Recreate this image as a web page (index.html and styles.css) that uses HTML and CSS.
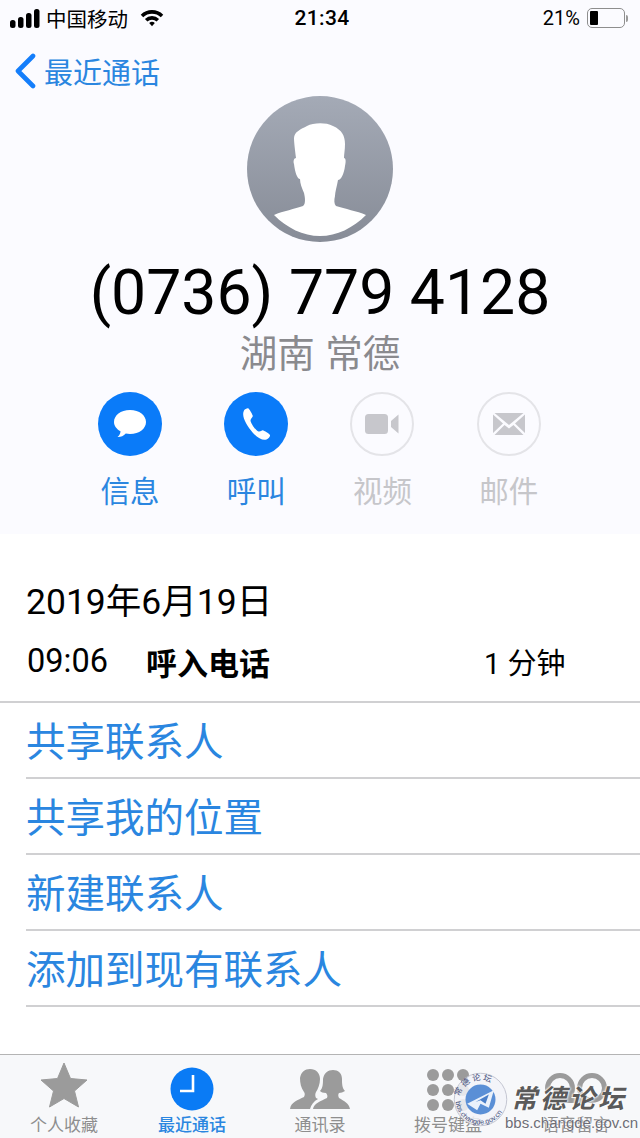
FILE: index.html
```html
<!DOCTYPE html>
<html lang="zh-CN">
<head>
    <meta charset="UTF-8">
    <meta name="viewport" content="width=device-width, initial-scale=1.0">
    <title>最近通话</title>
    <link rel="stylesheet" href="styles.css">
</head>
<body>
    <div class="phone">
        <div class="header">
            <div class="status-bar">
                <div class="status-left">
                    <svg class="signal" width="30" height="19" viewBox="0 0 30 19">
                        <rect x="0" y="11" width="5.5" height="8" rx="2.5"/>
                        <rect x="8" y="8" width="5.5" height="11" rx="2.5"/>
                        <rect x="16" y="4" width="5.5" height="15" rx="2.5"/>
                        <rect x="24" y="0" width="5.5" height="19" rx="2.5"/>
                    </svg>
                    <span class="carrier">中国移动</span>
                    <svg class="wifi" width="24" height="18" viewBox="0 0 21 16">
                        <path d="M0.5 5 A14.5 14.5 0 0 1 20.5 5 L18.3 7.3 A11.4 11.4 0 0 0 2.7 7.3 Z"/>
                        <path d="M4.2 8.8 A9.2 9.2 0 0 1 16.8 8.8 L14.6 11 A6.2 6.2 0 0 0 6.4 11 Z"/>
                        <path d="M8 12.5 A3.8 3.8 0 0 1 13 12.5 L10.5 15.4 Z"/>
                    </svg>
                </div>
                <div class="clock">21:34</div>
                <div class="status-right">
                    <span class="percent">21%</span>
                    <div class="battery"><div class="battery-level"></div></div>
                    <div class="battery-cap"></div>
                </div>
            </div>

            <div class="nav">
                <svg class="back-icon" width="22" height="36" viewBox="0 0 22 36">
                    <path d="M19 3 L4 18 L19 33" fill="none" stroke="#147efb" stroke-width="4.6" stroke-linecap="round" stroke-linejoin="round"/>
                </svg>
                <span class="back-label">最近通话</span>
            </div>

            <div class="contact">
                <div class="avatar">
                    <svg width="146" height="146" viewBox="0 0 146 146">
                        <path d="M27 119 C36 115 48 113 56 110 C59 108 58 101 57 97 C55 92 53 88 53 83 C50 83 48 76 47 68 C46 65 47 62 49 62 C48 54 47 46 47 42 C47 36 54 33 60 30 C66 27 78 26 86 30 C95 34 98 40 98 48 C98 54 97 58 97 62 C99 62 99 66 98 70 C97 78 94 84 91 84 C90 90 88 96 88 100 C87 104 87 108 89 110 C98 113 110 115 119 119 C106 132 90 140 73 140 C56 140 40 132 27 119 Z" fill="#fff"/>
                    </svg>
                </div>
                <div class="number">(0736) 779 4128</div>
                <div class="place">湖南 常德</div>
            </div>

            <div class="actions">
                <div class="action">
                    <div class="action-circle on">
                        <svg width="34" height="30" viewBox="0 0 34 30">
                            <path d="M17 1 C26.500 1 33 6.500 33 13 C33 19.500 26.500 25 17 25 C15.500 25 14 24.800 12.800 24.500 C10.500 27 7.500 28.200 4.500 28 C6.500 26.500 7.500 24.500 7.500 22.300 C3.500 20 1 16.800 1 13 C1 6.500 7.500 1 17 1 Z" fill="#fff"/>
                        </svg>
                    </div>
                    <span class="action-label on">信息</span>
                </div>
                <div class="action">
                    <div class="action-circle on">
                        <svg width="30" height="34" viewBox="0 0 30 34">
                            <path d="M3 3.500 C4 2 6.500 0.800 7.500 1.500 C8.500 2.200 11.500 7.500 11.800 8.800 C12 10 9.500 11.500 9.500 13.500 C9.500 16 15 24 17.500 24.500 C19.500 25 20.500 23.200 21.800 23.300 C23 23.500 28.500 27 29 28 C29.500 29.200 27.500 31.800 25.500 32.500 C22 33.800 17 31.500 12 26 C5.500 18.500 0 9 3 3.500 Z" fill="#fff"/>
                        </svg>
                    </div>
                    <span class="action-label on">呼叫</span>
                </div>
                <div class="action">
                    <div class="action-circle">
                        <svg width="34" height="20" viewBox="0 0 34 20">
                            <rect x="0" y="0" width="23" height="20" rx="3.500" fill="#c7c7cc"/>
                            <path d="M26 7 L33.500 0.500 L33.500 19.500 L26 13 Z" fill="#c7c7cc"/>
                        </svg>
                    </div>
                    <span class="action-label">视频</span>
                </div>
                <div class="action">
                    <div class="action-circle">
                        <svg width="32" height="22" viewBox="0 0 32 22">
                            <path d="M1.500 0 H30.500 L16 12 Z M0 1.500 L10 10.500 L0 20 Z M32 1.500 L22 10.500 L32 20 Z M1.500 22 L11.500 12 L16 15.500 L20.500 12 L30.500 22 Z" fill="#c7c7cc"/>
                        </svg>
                    </div>
                    <span class="action-label">邮件</span>
                </div>
            </div>
        </div>

        <div class="details">
            <div class="call-date">2019年6月19日</div>
            <div class="call-row">
                <span class="call-time">09:06</span>
                <span class="call-type">呼入电话</span>
                <span class="call-length">1 分钟</span>
            </div>
            <div class="link-list">
                <div class="link-row">共享联系人</div>
                <div class="link-row">共享我的位置</div>
                <div class="link-row">新建联系人</div>
                <div class="link-row">添加到现有联系人</div>
            </div>
        </div>

        <div class="tabbar">
            <div class="tab">
                <svg class="tab-star" width="48" height="46" viewBox="0 0 48 46">
                    <path d="M24 1 L30.500 16.500 L47 18 L34.500 29 L38.500 45 L24 36.500 L9.500 45 L13.500 29 L1 18 L17.500 16.500 Z" fill="#9b9b9b" stroke="#9b9b9b" stroke-width="1" stroke-linejoin="round"/>
                </svg>
                <span class="tab-label">个人收藏</span>
            </div>
            <div class="tab on">
                <svg width="44" height="44" viewBox="0 0 44 44">
                    <circle cx="22" cy="22" r="21.500" fill="#0a7bf5"/>
                    <path d="M23 8 V24 H10" fill="none" stroke="#fff" stroke-width="2.600"/>
                </svg>
                <span class="tab-label">最近通话</span>
            </div>
            <div class="tab">
                <svg width="60" height="42" viewBox="0 0 60 42">
                    <path d="M0 40 C1 33 8 31 14 28 C15 26 15 24 14 23 C11 19 10 14 10 9 C11 3 15 0 20 0 C26 0 30 4 30 10 C30 15 28 20 26 23 C25 25 25 27 26 29 L28 30 C24 32 21 36 20 40 Z" fill="#9b9b9b"/>
                    <path d="M23 40 C24 34 31 32 37 29 C38 27 37 25 36 24 C33 24 31 23 30 22 C33 19 33 14 33 10 C34 4 38 1 43 1 C48 1 52 4 52 10 C52 14 52 19 55 22 C53 23 51 24 49 24 C48 25 48 27 49 29 C54 32 59 34 60 40 Z" fill="#9b9b9b"/>
                </svg>
                <span class="tab-label">通讯录</span>
            </div>
            <div class="tab">
                <div class="keypad">
                    <i></i><i></i><i></i><i></i><i></i><i></i><i></i><i></i><i></i>
                </div>
                <span class="tab-label">拨号键盘</span>
            </div>
            <div class="tab">
                <svg class="tab-voicemail" width="64" height="30" viewBox="0 0 64 30">
                    <circle cx="16" cy="15" r="12.500" fill="none" stroke="#9b9b9b" stroke-width="5"/>
                    <circle cx="48" cy="15" r="12.500" fill="none" stroke="#9b9b9b" stroke-width="5"/>
                    <rect x="16" y="25" width="32" height="5" fill="#9b9b9b"/>
                </svg>
                <span class="tab-label">语音留言</span>
            </div>
        </div>

        <div class="watermark">
            <div class="seal">
                <svg width="55" height="55" viewBox="0 0 66 66">
                    <circle cx="33" cy="33" r="31.500" fill="#f2f3f8" fill-opacity="0.85" stroke="#b9bcc9" stroke-width="1"/>
                    <circle cx="33" cy="33" r="18" fill="#5a8fd6"/>
                    <path d="M17 38 L49 22 L43 43 L33 38 L29 46 Z" fill="#eaf1fb"/>
                    <path d="M27 36 L43 27 L39 38 L33 34 Z" fill="#4a7fc9"/>
                    <path id="seal-arc" d="M7 36 A26 26 0 0 1 59 36" fill="none"/>
                    <text class="seal-top"><textPath href="#seal-arc" startOffset="8%">常 德 论 坛</textPath></text>
                    <path id="seal-arc-low" d="M3 33 A30 30 0 0 0 63 33" fill="none"/>
                    <text class="seal-low"><textPath href="#seal-arc-low" startOffset="3%">bbs.changde.gov.cn</textPath></text>
                </svg>
            </div>
            <div class="mark-text">
                <div class="mark-name">常德论坛</div>
                <div class="mark-url">bbs.changde.gov.cn</div>
            </div>
        </div>
    </div>
</body>
</html>
```

FILE: styles.css
```css
* {
    box-sizing: border-box;
}
html, body {
    margin: 0;
    padding: 0;
}
body {
    font-family: "Liberation Sans", "Noto Sans CJK SC", sans-serif;
    background-color: #fff;
    color: #000;
}
.phone {
    position: relative;
    width: 640px;
    height: 1138px;
    overflow: hidden;
    display: flex;
    flex-direction: column;
}
.header {
    height: 534px;
    background-color: #fbfbff;
}
.status-bar {
    height: 36px;
    padding: 0 12px 0 10px;
    display: grid;
    grid-template-columns: 1fr auto 1fr;
    align-items: center;
}
.status-left {
    display: flex;
    align-items: center;
}
.signal {
    fill: #000;
}
.carrier {
    margin-left: 6px;
    font-size: 20.5px;
}
.wifi {
    margin-left: 12px;
    fill: #000;
}
.clock {
    margin-left: 6px;
    font-family: "Roboto", sans-serif;
    font-size: 21px;
    font-weight: 500;
    letter-spacing: 0.3px;
}
.status-right {
    display: flex;
    align-items: center;
    justify-content: flex-end;
}
.percent {
    font-family: "Roboto", sans-serif;
    font-size: 20px;
    margin-right: 7px;
}
.battery {
    width: 38px;
    height: 20px;
    border: 1.5px solid #8e8e8e;
    border-radius: 5px;
    padding: 2px;
}
.battery-level {
    width: 8px;
    height: 100%;
    background-color: #000;
    border-radius: 1px;
}
.battery-cap {
    width: 2px;
    height: 7px;
    margin-left: 1px;
    background-color: #9a9a9a;
    border-radius: 0 2px 2px 0;
}
.nav {
    height: 60px;
    padding: 10px 0 0 14px;
    display: flex;
    align-items: center;
}
.back-label {
    margin-left: 8px;
    font-size: 29px;
    color: #2a86e0;
}
.contact {
    display: flex;
    flex-direction: column;
    align-items: center;
}
.avatar {
    width: 146px;
    height: 146px;
    border-radius: 50%;
    overflow: hidden;
    background: linear-gradient(#a4aab6, #878c97);
}
.avatar svg {
    display: block;
}
.number {
    margin-top: 16px;
    font-family: "Roboto", sans-serif;
    font-size: 62.5px;
    line-height: 70px;
    white-space: nowrap;
}
.place {
    margin-top: 3px;
    font-size: 37.5px;
    line-height: 46px;
    color: #8a8a8e;
}
.actions {
    margin-top: 15px;
    padding-left: 67px;
    display: grid;
    grid-template-columns: repeat(4, 126.200px);
}
.action {
    display: flex;
    flex-direction: column;
    align-items: center;
}
.action-circle {
    width: 64px;
    height: 64px;
    border-radius: 50%;
    border: 2px solid #e4e4e8;
    display: flex;
    align-items: center;
    justify-content: center;
}
.action-circle.on {
    background-color: #0a7bf9;
    border: 0;
}
.action-label {
    margin-top: 15px;
    font-size: 29.500px;
    line-height: 42px;
    color: #c6c6ca;
}
.action-label.on {
    color: #2a86e0;
}
.details {
    flex: 1;
    background-color: #fff;
}
.call-date {
    padding: 48px 0 0 26px;
    font-family: "Roboto", "Noto Sans CJK SC", sans-serif;
    font-size: 35.500px;
    line-height: 40px;
}
.call-row {
    height: 81px;
    padding: 0 0 1px 27px;
    border-bottom: 2px solid #d0d0d2;
    display: flex;
    align-items: center;
    font-size: 29px;
}
.call-time {
    width: 119px;
    font-family: "Roboto", sans-serif;
    font-size: 32.500px;
}
.call-type {
    width: 338px;
    font-size: 31px;
    font-weight: 700;
}
.call-length {
    font-family: "Roboto", "Noto Sans CJK SC", sans-serif;
}
.link-list {
    padding-left: 26px;
}
.link-row {
    height: 76px;
    padding-bottom: 3px;
    border-bottom: 2px solid #d0d0d2;
    display: flex;
    align-items: center;
    font-size: 39.500px;
    color: #2a86e0;
}
.tabbar {
    height: 84px;
    background-color: #f7f8fa;
    border-top: 1px solid #b4b4b4;
    display: grid;
    grid-template-columns: repeat(5, 128px);
}
.tab {
    display: flex;
    flex-direction: column;
    align-items: center;
    justify-content: flex-end;
    overflow: hidden;
}
.tab-label {
    font-size: 17px;
    line-height: 24px;
    color: #8e8e8e;
    white-space: nowrap;
}
.tab.on .tab-label {
    color: #2a86e0;
    font-weight: 500;
}
.tab svg {
    margin-bottom: 3px;
}
.tab svg.tab-star {
    margin-bottom: 6px;
}
.tab svg.tab-voicemail {
    margin-bottom: 11px;
}
.keypad {
    width: 42px;
    display: grid;
    grid-template-columns: repeat(3, 12px);
    gap: 3px;
    margin-bottom: 3px;
}
.keypad i {
    width: 12px;
    height: 12px;
    border-radius: 50%;
    background-color: #9b9b9b;
}
.watermark {
    position: absolute;
    left: 453px;
    top: 1072px;
    display: flex;
    align-items: flex-start;
}
.seal svg {
    display: block;
}
.seal-top {
    font-family: "Noto Sans CJK SC", sans-serif;
    font-size: 10px;
    fill: #46507a;
}
.seal-low {
    font-family: "Liberation Sans", sans-serif;
    font-size: 8.500px;
    fill: #46507a;
}
.mark-text {
    margin-left: -3px;
    width: 130px;
    flex: none;
}
.mark-name {
    margin-top: 8px;
    padding-left: 6px;
    font-family: "Noto Sans CJK SC", sans-serif;
    font-size: 26px;
    font-style: italic;
    font-weight: 700;
    line-height: 34px;
    letter-spacing: 3px;
    color: #5a5a5a;
    text-shadow: 0 0 2px #fff, 0 0 2px #fff, 0 0 3px #fff;
    white-space: nowrap;
}
.mark-url {
    margin-top: 1px;
    font-family: "Liberation Sans", sans-serif;
    font-size: 15px;
    line-height: 16px;
    color: #6d6d76;
    text-shadow: 0 0 2px #fff, 0 0 2px #fff;
    white-space: nowrap;
}
```
